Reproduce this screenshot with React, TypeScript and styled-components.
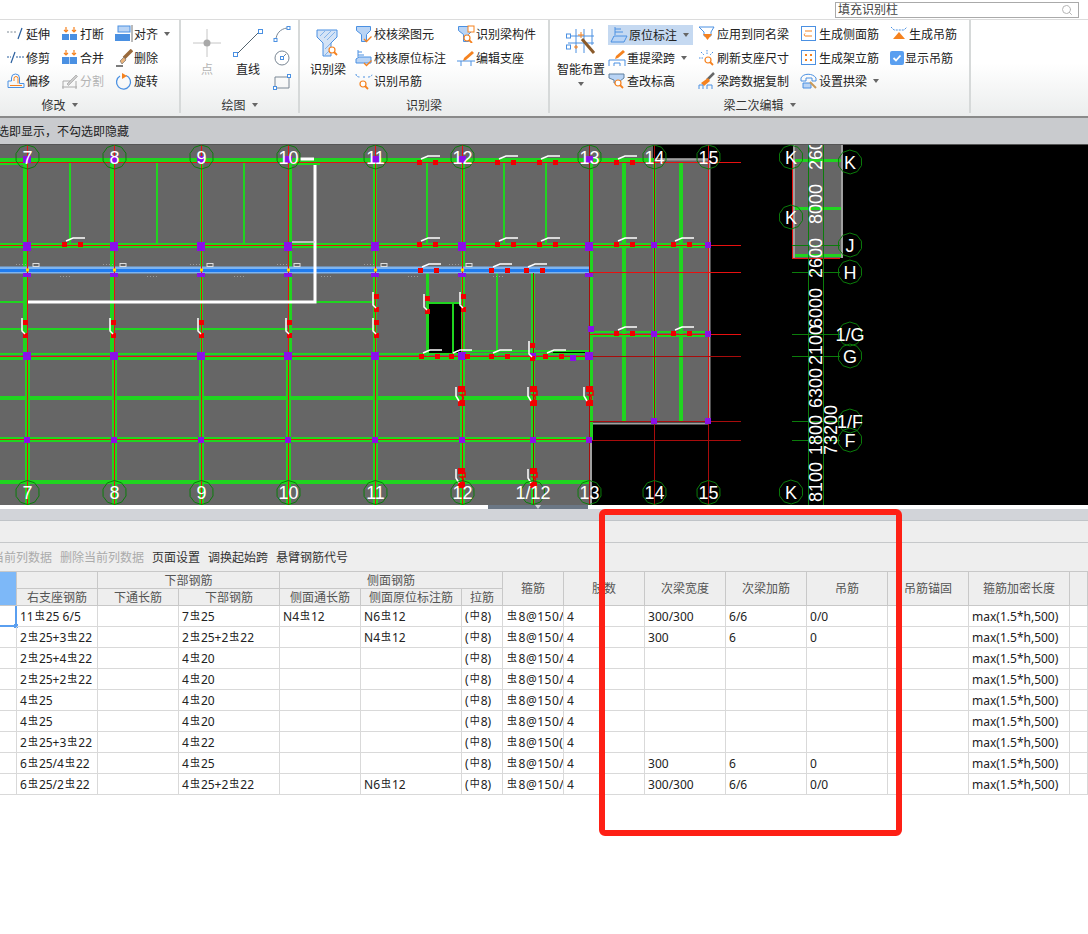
import React from 'react';
import styled, { createGlobalStyle } from 'styled-components';
import { Search } from 'lucide-react';

const BLUE = '#4a90e2';
const LIGHT = '#b9d4f5';
const ORANGE = '#f5821f';
const GREY = '#7f8a94';

const GlobalStyle = createGlobalStyle`
  html, body {
    margin: 0;
    background: #fff;
  }
  body {
    font-family: "Noto Sans", "Noto Sans CJK SC", sans-serif;
    font-size: 12px;
    color: #222;
  }
`;

const Page = styled.div`
  position: relative;
  width: 1088px;
  height: 934px;
  overflow: hidden;
  background: #fff;
`;

const TopBar = styled.div`
  display: flex;
  justify-content: flex-end;
  height: 19px;
  padding-right: 9px;
  border-bottom: 1px solid #dcdcdc;
`;

const SearchBox = styled.div`
  display: flex;
  align-items: center;
  justify-content: space-between;
  box-sizing: border-box;
  width: 244px;
  height: 16px;
  margin-top: 2px;
  padding: 0 5px 0 2px;
  border: 1px solid #aaa;
  color: #444;
  line-height: 14px;
  svg {
    color: #b5b5b5;
  }
`;

const Ribbon = styled.div`
  display: flex;
  height: 96px;
  border-bottom: 2px solid #8a8a8a;
  background: linear-gradient(#fff 0%, #fff 45%, #ebeded 100%);
`;

const Group = styled.div<{ $width: number; $shift?: number }>`
  display: flex;
  flex-direction: column;
  flex: none;
  box-sizing: border-box;
  width: ${({ $width }) => $width}px;
  margin-left: ${({ $shift }) => $shift || 0}px;
  border-right: 2px solid #d6d9d9;
  margin-bottom: 3px;
`;

const GroupBody = styled.div<{ $pad: number }>`
  display: flex;
  flex: none;
  height: 76px;
  padding-left: ${({ $pad }) => $pad}px;
`;

const GroupLabel = styled.div`
  display: flex;
  flex: none;
  align-items: center;
  justify-content: center;
  gap: 6px;
  height: 18px;
  color: #333;
`;

const Caret = styled.i<{ $gap?: number }>`
  display: inline-block;
  flex: none;
  width: 0;
  height: 0;
  margin-left: ${({ $gap }) => $gap || 0}px;
  border-left: 3.5px solid transparent;
  border-right: 3.5px solid transparent;
  border-top: 4px solid #666;
`;

const Column = styled.div<{ $width?: number; $left?: number }>`
  display: flex;
  flex-direction: column;
  flex: none;
  width: ${({ $width }) => ($width ? `${$width}px` : 'auto')};
  margin-left: ${({ $left }) => $left || 0}px;
  padding-top: 2.5px;
`;

const Item = styled.div<{ $active?: boolean; $off?: boolean }>`
  display: flex;
  align-items: center;
  gap: 1px;
  height: 23.5px;
  white-space: nowrap;
  color: ${({ $off }) => ($off ? '#b4b4b4' : '#222')};
  ${({ $active }) =>
    $active &&
    `
    box-sizing: border-box;
    width: 85px;
    height: 20px;
    margin: 2px 0 1.5px;
    padding-left: 2px;
    background: #c5d9f1;
  `}
`;

const Large = styled.div<{ $width: number; $left?: number; $off?: boolean }>`
  display: flex;
  flex-direction: column;
  align-items: center;
  flex: none;
  width: ${({ $width }) => $width}px;
  margin-left: ${({ $left }) => $left || 0}px;
  padding-top: 6px;
  color: ${({ $off }) => ($off ? '#b4b4b4' : '#222')};
`;

const LargeIcon = styled.div`
  display: flex;
  align-items: center;
  justify-content: center;
  height: 34px;
`;

const LargeText = styled.div`
  height: 22px;
  line-height: 20px;
  white-space: nowrap;
`;

const Hint = styled.div`
  height: 26px;
  border-bottom: 1px solid #555;
  background: #c9cbce;
  color: #222;
  line-height: 27px;
  white-space: nowrap;
  span {
    margin-left: -15px;
    display: inline-block;
  }
`;

const Canvas = styled.div`
  height: 360px;
  background: #000;
  svg {
    display: block;
  }
`;

const Splitter = styled.div`
  display: flex;
  height: 4px;
  padding-left: 488px;
  background: #fff;
`;

const SplitHandle = styled.div`
  display: flex;
  justify-content: center;
  align-items: center;
  width: 100px;
  background: #6b7785;
  i {
    border-top-color: #cfd3d8;
  }
`;

const Band = styled.div`
  height: 11px;
  border-bottom: 1px solid #c0c4c8;
  background: #d2d4d9;
`;

const EmptyPanel = styled.div`
  height: 21px;
  border-bottom: 1px solid #c6c8ca;
  background: #eee;
`;

const Toolbar = styled.div`
  display: flex;
  align-items: center;
  gap: 8px;
  height: 28px;
  margin-left: -32px;
  background: #eee;
  white-space: nowrap;
`;

const ToolText = styled.span<{ $off?: boolean }>`
  color: ${({ $off }) => ($off ? '#ababab' : '#333')};
`;

const Sheet = styled.table`
  width: 1088px;
  table-layout: fixed;
  border-collapse: separate;
  border-spacing: 0;
  border-top: 1px solid #c8c8c8;
`;

const Head = styled.th<{ $blue?: boolean }>`
  box-sizing: border-box;
  height: 17px;
  padding: 0;
  border-right: 1px solid #c8c8c8;
  border-bottom: 1px solid #c8c8c8;
  background: ${({ $blue }) => ($blue ? '#7db8f8' : '#eee')};
  color: #555;
  font-weight: 400;
  font-size: 12px;
  line-height: 15px;
  white-space: nowrap;
  overflow: hidden;
`;

const Cell = styled.td<{ $selected?: boolean }>`
  position: relative;
  box-sizing: border-box;
  height: 21px;
  padding: 0;
  border-right: 1px solid #d9d9d9;
  border-bottom: 1px solid #d9d9d9;
  overflow: hidden;
  ${({ $selected }) =>
    $selected &&
    `
    overflow: visible;
    border-right: 2px solid #5a9ff0;
    border-bottom: 2px solid #5a9ff0;
    &::after {
      content: '';
      position: absolute;
      right: -3px;
      bottom: -3px;
      width: 4px;
      height: 4px;
      background: #5a9ff0;
    }
  `}
`;

const CellText = styled.div<{ $wide?: boolean }>`
  height: 20px;
  padding-left: 3px;
  color: #222;
  font-size: 12px;
  line-height: 22px;
  letter-spacing: ${({ $wide }) => ($wide ? '0.5px' : '0')};
  white-space: nowrap;
  overflow: hidden;
`;

const SteelMark = styled.span`
  font-family: "Noto Sans CJK SC", sans-serif;
  font-size: 10px;
  line-height: 10px;
  margin: 0 1px;
  vertical-align: 2px;
`;

const Annotation = styled.div`
  position: absolute;
  left: 599px;
  top: 509px;
  box-sizing: border-box;
  width: 303px;
  height: 327px;
  border: 6px solid #fe2015;
  border-radius: 6px;
  pointer-events: none;
`;

const Ic = ({ w = 18, h = 18, children }: { w?: number; h?: number; children: React.ReactNode }) => (
  <svg width={w} height={h} viewBox={`0 0 ${w} ${h}`} fill="none" style={{ flex: 'none' }}>
    {children}
  </svg>
);

const Lens = ({ x, y }: { x: number; y: number }) => (
  <g stroke={ORANGE} strokeWidth="1.2">
    <circle cx={x} cy={y} r="3" fill="#fff" />
    <path d={`M${x + 2} ${y + 2}l3 3`} strokeWidth="1.8" />
  </g>
);

const Tick = ({ x, y }: { x: number; y: number }) => (
  <path d={`M${x} ${y}l2.5 2.5 5-5`} stroke={ORANGE} strokeWidth="1.3" />
);

const Funnel = () => (
  <path d="M1.5 1.5h14v4l-4 4v7h-5v-7l-5-4z" fill={LIGHT} stroke={BLUE} />
);

const icons: Record<string, React.ReactNode> = {
  extend: (
    <Ic>
      <path d="M0 7h10" stroke={GREY} strokeDasharray="2 1.5" />
      <path d="M11 14l4-11" stroke="#2a5f9e" strokeWidth="1.2" />
    </Ic>
  ),
  breakUp: (
    <Ic>
      <path d="M5 2v5M3 5l2 2 2-2M13 2v5M11 5l2 2 2-2" stroke={ORANGE} strokeWidth="1.2" />
      <rect x="1" y="9" width="7" height="6" fill={BLUE} />
      <rect x="9" y="9" width="7" height="6" fill={BLUE} />
    </Ic>
  ),
  align: (
    <Ic>
      <rect x="3" y="1" width="12" height="6" fill={LIGHT} stroke={BLUE} />
      <rect x="0" y="9" width="15" height="7" fill={BLUE} />
      <path d="M17 0v17" stroke="#777" />
    </Ic>
  ),
  trim: (
    <Ic>
      <path d="M0 8h4M9 8h8" stroke="#2a5f9e" strokeDasharray="2 1" />
      <path d="M4 14L8 3" stroke="#2a5f9e" strokeWidth="1.2" />
    </Ic>
  ),
  merge: (
    <Ic>
      <path d="M5 1v5M3 4l2 2 2-2M13 1v5M11 4l2 2 2-2" stroke={ORANGE} strokeWidth="1.2" />
      <rect x="1" y="8" width="15" height="7" fill={BLUE} />
      <path d="M8.5 8v7" stroke={LIGHT} />
    </Ic>
  ),
  brush: (
    <Ic>
      <path d="M17 1L9 9" stroke="#9a6a3c" strokeWidth="3.5" />
      <path d="M9 8l-4 4 2 3 4-4z" fill="#e8b27a" stroke="#666" strokeWidth=".6" />
      <path d="M1 17h7" stroke="#222" strokeWidth="1.2" />
    </Ic>
  ),
  offset: (
    <Ic>
      <path d="M1 15.5h16v-4h-4.500V6a4 4 0 00-8 0v3H1z" stroke={BLUE} />
      <path d="M3 13.500h12M7 9V6.500a2 2 0 014 0v5" stroke={ORANGE} />
    </Ic>
  ),
  divide: (
    <Ic>
      <path d="M1 15h15M2 9v8M15 9v8M2 9h7" stroke="#aaa" />
      <path d="M6 12l9-9 1.500 1.500-9 9z" fill="#ccc" stroke="#999" strokeWidth=".6" />
    </Ic>
  ),
  rotate: (
    <Ic>
      <path d="M11 3.500a7 7 0 11-6 .5" stroke={BLUE} strokeWidth="1.3" />
      <path d="M7 1l5 3-5 3z" fill={ORANGE} />
    </Ic>
  ),
  point: (
    <Ic w={30} h={30}>
      <path d="M15 1v28M1 15h28" stroke="#c6c6c6" />
      <circle cx="15" cy="15" r="3.500" fill="#a8a8a8" />
    </Ic>
  ),
  line: (
    <Ic w={30} h={30}>
      <path d="M3 27L27 3" stroke="#55646f" />
      <rect x="0.500" y="24.500" width="4" height="4" fill="#fff" stroke={BLUE} />
      <rect x="25.500" y="1.500" width="4" height="4" fill="#fff" stroke={BLUE} />
    </Ic>
  ),
  arc: (
    <Ic>
      <path d="M3 15C3 9 7 4 14 3" stroke="#7a8794" />
      <rect x="1" y="13.500" width="3" height="3" fill="#fff" stroke={BLUE} />
      <rect x="14" y="1.500" width="3" height="3" fill="#fff" stroke={BLUE} />
    </Ic>
  ),
  circle: (
    <Ic>
      <circle cx="9" cy="9" r="7" stroke="#7a8794" />
      <path d="M9 9l4-4" stroke="#7a8794" />
      <rect x="7.500" y="7.500" width="3" height="3" fill="#fff" stroke={BLUE} />
    </Ic>
  ),
  rect: (
    <Ic>
      <path d="M2 5h14v11H2z" stroke="#7a8794" />
      <rect x="14.500" y="2.500" width="3" height="3" fill="#fff" stroke={BLUE} />
      <rect x="0.500" y="14.500" width="3" height="3" fill="#fff" stroke={BLUE} />
    </Ic>
  ),
  funnelLarge: (
    <Ic w={24} h={28}>
      <path d="M1 1h20v7l-6 6v13H7V14L1 8z" fill="#d4e3f6" stroke={BLUE} />
      <path d="M4 7l5-5M8 9l7-7M11 11l8-8M9 20l6-6M9 26l6-6" stroke={BLUE} strokeWidth=".6" />
      <Lens x={16} y={21} />
    </Ic>
  ),
  checkBeam: (
    <Ic>
      <Funnel />
      <Tick x={9} y={14} />
    </Ic>
  ),
  checkMark: (
    <Ic>
      <path d="M3 1v7M3 3h4M3 6h6" stroke={BLUE} />
      <path d="M1 10l3-2h12v6H1z" fill={LIGHT} stroke={BLUE} />
      <Tick x={9} y={14} />
    </Ic>
  ),
  findHanger: (
    <Ic>
      <path d="M1 2c0 3 3 3 4 3M8 5h2M13 5c1 0 4 0 4-3" stroke={BLUE} strokeDasharray="2 1" />
      <Lens x={8} y={12} />
    </Ic>
  ),
  beamPart: (
    <Ic>
      <Funnel />
      <rect x="11" y="1" width="6" height="6" fill="#fff" stroke={ORANGE} />
      <Lens x={10} y={13} />
    </Ic>
  ),
  editSupport: (
    <Ic>
      <path d="M15 2l2 2-8 7-3 1 1-3z" fill={ORANGE} />
      <path d="M0 12h18M4 12v5M14 12v5" stroke={BLUE} />
    </Ic>
  ),
  smartGrid: (
    <Ic w={30} h={32}>
      <path d="M2 9h26M2 16h26M10 2v24M18 2v24M26 2v16" stroke={BLUE} strokeWidth="1" />
      <rect x="0.500" y="7" width="4" height="4" fill="#fff" stroke={BLUE} />
      <rect x="0.500" y="18" width="4" height="4" fill="#fff" stroke={BLUE} />
      <path d="M16 12l12 14" stroke="#8a5a2a" strokeWidth="3" />
      <path d="M12 8h6M15 5v6M8 20h4M10 18v4" stroke={ORANGE} />
    </Ic>
  ),
  markHere: (
    <Ic>
      <path d="M5 1v8M5 3h6M5 6h8" stroke={BLUE} />
      <path d="M1 16l3-6h13l-3 6z" fill={LIGHT} stroke={BLUE} />
    </Ic>
  ),
  respan: (
    <Ic>
      <path d="M15 1l2 2-7 6-3 1 1-3z" fill={ORANGE} />
      <path d="M1 17v-6h16v6M6 17v-3h6v3" stroke={BLUE} />
    </Ic>
  ),
  level: (
    <Ic>
      <path d="M1 2h15v4l-4 3v2H6V8L1 6z" fill={LIGHT} stroke="#5f7f9f" />
      <Lens x={10} y={11} />
    </Ic>
  ),
  sameName: (
    <Ic>
      <path d="M1 2h15l-3 5v4H6V7z" stroke={BLUE} />
      <path d="M5 9h9l-4.500 6z" fill={ORANGE} />
    </Ic>
  ),
  refresh: (
    <Ic>
      <path d="M9 1v4M1 9h4M3 3l3 3M15 3l-3 3" stroke={BLUE} strokeDasharray="1.500 1" />
      <Lens x={10} y={11} />
    </Ic>
  ),
  copySpan: (
    <Ic>
      <path d="M16 1l-7 7" stroke="#666" strokeWidth="2.500" />
      <path d="M10 6L3 11l3 3 6-5z" fill={ORANGE} />
      <path d="M1 17v-4h4v4M9 17v-4h5v4" stroke={BLUE} />
    </Ic>
  ),
  sideBar: (
    <Ic>
      <rect x="1.500" y="1.500" width="14" height="14" stroke={BLUE} />
      <path d="M5 6h7M5 8.500c-1 1-1 2 0 2.500h7" stroke={ORANGE} />
    </Ic>
  ),
  frameBar: (
    <Ic>
      <rect x="1.500" y="1.500" width="14" height="14" stroke={BLUE} />
      <path d="M5 5h2v2H5zM10 5h2v2h-2zM5 10h2v2H5zM10 10h2v2h-2z" fill={ORANGE} />
    </Ic>
  ),
  arch: (
    <Ic>
      <path d="M1 6c2-5 12-5 15 0v3h-4V6H6v3H1z" stroke={BLUE} />
      <path d="M3 11h8v5H3z" fill={LIGHT} stroke={BLUE} />
      <path d="M10 10l6 6" stroke="#c89a5a" strokeWidth="2" />
    </Ic>
  ),
  hanger: (
    <Ic>
      <path d="M1 2l3 3h10l3-3" stroke={BLUE} strokeDasharray="2 1" />
      <path d="M9 7l6 7H3z" fill={ORANGE} />
    </Ic>
  ),
  checked: (
    <Ic w={14} h={16}>
      <rect y="1" width="14" height="14" rx="2" fill="#5a9ff0" />
      <path d="M3.500 8l2.500 2.500 4.500-5" stroke="#fff" strokeWidth="1.800" />
    </Ic>
  ),
};

interface Tool {
  icon: string;
  label?: string;
  caret?: boolean;
  off?: boolean;
  active?: boolean;
}

function ToolColumn({ tools, width, left }: { tools: Tool[]; width?: number; left?: number }) {
  return (
    <Column $width={width} $left={left}>
      {tools.map(({ icon, label, caret, off, active }) => (
        <Item key={icon} $off={off} $active={active}>
          {icons[icon]}
          {label}
          {caret && <Caret $gap={5} />}
        </Item>
      ))}
    </Column>
  );
}

function Tools() {
  return (
    <Ribbon>
      <Group $width={241} $shift={-60}>
        <GroupBody $pad={67}>
          <ToolColumn
            width={54}
            tools={[
              { icon: 'extend', label: '延伸' },
              { icon: 'trim', label: '修剪' },
              { icon: 'offset', label: '偏移' },
            ]}
          />
          <ToolColumn
            width={54}
            tools={[
              { icon: 'breakUp', label: '打断' },
              { icon: 'merge', label: '合并' },
              { icon: 'divide', label: '分割', off: true },
            ]}
          />
          <ToolColumn
            tools={[
              { icon: 'align', label: '对齐', caret: true },
              { icon: 'brush', label: '删除' },
              { icon: 'rotate', label: '旋转' },
            ]}
          />
        </GroupBody>
        <GroupLabel>
          修改
          <Caret />
        </GroupLabel>
      </Group>

      <Group $width={119}>
        <GroupBody $pad={11}>
          <Large $width={30} $off>
            <LargeIcon>{icons.point}</LargeIcon>
            <LargeText>点</LargeText>
          </Large>
          <Large $width={30} $left={11}>
            <LargeIcon>{icons.line}</LargeIcon>
            <LargeText>直线</LargeText>
          </Large>
          <ToolColumn
            left={10}
            tools={[{ icon: 'arc' }, { icon: 'circle' }, { icon: 'rect' }]}
          />
        </GroupBody>
        <GroupLabel>
          绘图
          <Caret />
        </GroupLabel>
      </Group>

      <Group $width={250}>
        <GroupBody $pad={10}>
          <Large $width={36}>
            <LargeIcon>{icons.funnelLarge}</LargeIcon>
            <LargeText>识别梁</LargeText>
          </Large>
          <ToolColumn
            left={9}
            width={102}
            tools={[
              { icon: 'checkBeam', label: '校核梁图元' },
              { icon: 'checkMark', label: '校核原位标注' },
              { icon: 'findHanger', label: '识别吊筋' },
            ]}
          />
          <ToolColumn
            tools={[
              { icon: 'beamPart', label: '识别梁构件' },
              { icon: 'editSupport', label: '编辑支座' },
            ]}
          />
        </GroupBody>
        <GroupLabel>识别梁</GroupLabel>
      </Group>

      <Group $width={421}>
        <GroupBody $pad={7}>
          <Large $width={48}>
            <LargeIcon>{icons.smartGrid}</LargeIcon>
            <LargeText>智能布置</LargeText>
            <Caret />
          </Large>
          <ToolColumn
            left={3}
            width={90}
            tools={[
              { icon: 'markHere', label: '原位标注', caret: true, active: true },
              { icon: 'respan', label: '重提梁跨', caret: true },
              { icon: 'level', label: '查改标高' },
            ]}
          />
          <ToolColumn
            width={102}
            tools={[
              { icon: 'sameName', label: '应用到同名梁' },
              { icon: 'refresh', label: '刷新支座尺寸' },
              { icon: 'copySpan', label: '梁跨数据复制' },
            ]}
          />
          <ToolColumn
            width={90}
            tools={[
              { icon: 'sideBar', label: '生成侧面筋' },
              { icon: 'frameBar', label: '生成架立筋' },
              { icon: 'arch', label: '设置拱梁', caret: true },
            ]}
          />
          <ToolColumn
            tools={[
              { icon: 'hanger', label: '生成吊筋' },
              { icon: 'checked', label: '显示吊筋' },
            ]}
          />
        </GroupBody>
        <GroupLabel>
          梁二次编辑
          <Caret />
        </GroupLabel>
      </Group>
    </Ribbon>
  );
}

const GREEN = '#20d420';
const DARK_GREEN = '#0b7d0b';
const RED = '#e81010';
const DARK_RED = '#a80c0c';
const PURPLE = '#8a10e8';

const axisX = [27, 114, 201, 288, 375, 462, 589, 654, 708];
const axisNames = ['7', '8', '9', '10', '11', '12', '13', '14', '15'];
const mainAxes = [27, 114, 201, 288, 375, 462, 589];

type Seg = [number, number, number, number, number?];

const greenLines: Seg[] = [
  [0, 160, 654, 160, 4],
  [0, 164, 24, 164, 1.5],
  [290, 164, 320, 164, 1.5],
  [0, 244, 708, 244, 3],
  [0, 247, 708, 247, 1.5],
  [0, 302, 24, 302, 2],
  [316, 302, 372, 302, 2],
  [0, 329, 375, 329, 2],
  [0, 354, 590, 354, 1.5],
  [0, 358, 590, 358, 3],
  [0, 398, 590, 398, 4],
  [0, 438, 590, 438, 1.5],
  [0, 441, 590, 441, 1.5],
  [0, 482, 590, 482, 4],
  [590, 332, 708, 332, 1.5],
  [590, 336, 708, 336, 2],
  [70, 162, 70, 243, 2],
  [157, 162, 157, 243, 2],
  [244, 162, 244, 243, 2],
  [427, 162, 427, 243, 2],
  [504, 162, 504, 243, 2],
  [546, 162, 546, 243, 2],
  [427, 273, 427, 356, 3],
  [497, 273, 497, 356, 2],
  [533, 273, 533, 505, 4],
  [624, 162, 624, 421, 4],
  [681, 162, 681, 421, 4],
  [25, 160, 25, 356, 4],
  [112.5, 160, 112.5, 356, 5],
  [201.5, 160, 201.5, 356, 3],
  [290, 160, 290, 356, 4],
  [374.5, 160, 374.5, 356, 4],
  [463, 160, 463, 356, 4],
  [591, 160, 591, 441, 3],
  [654.5, 160, 654.5, 422, 3],
  [27.5, 356, 27.5, 505, 5],
  [114.5, 356, 114.5, 505, 5],
  [201.5, 356, 201.5, 505, 5],
  [288.5, 356, 288.5, 505, 5],
  [375.5, 356, 375.5, 505, 5],
  [462.5, 356, 462.5, 505, 5],
  [462, 351, 590, 351, 2],
];

const redLines: Seg[] = [
  [0, 162, 741, 162],
  [0, 245.500, 741, 245.500],
  [589, 272, 741, 272],
  [589, 334, 741, 334],
  [0, 356, 590, 356],
  [0, 439.500, 590, 439.500],
  [27, 145, 27, 505],
  [114, 145, 114, 505],
  [201, 145, 201, 505],
  [288, 145, 288, 505],
  [375, 145, 375, 505],
  [462, 145, 462, 505],
  [708.500, 145, 708.500, 422],
  [792, 160, 792, 258],
  [792, 258, 840, 258],
];

const darkRedLines: Seg[] = [
  [590, 356, 741, 356],
  [589, 421, 741, 421],
  [590, 440, 741, 440],
  [589, 145, 589, 505],
  [654, 145, 654, 505],
  [708.500, 422, 708.500, 505],
  [533, 273, 533, 505],
];

const darkGreenLines: Seg[] = [
  [808, 145, 808, 505],
  [823, 145, 823, 505],
  [792, 245, 840, 245],
  [792, 272, 840, 272],
  [792, 334, 840, 334],
  [792, 356, 840, 356],
  [792, 421, 840, 421],
  [792, 440, 840, 440],
];

const hMarks: [number, number][] = [
  [64, 244], [419, 162], [497, 162], [539, 162], [616, 162],
  [419, 244], [497, 244], [539, 244], [616, 244], [673, 244],
  [420, 270], [491, 270], [526, 270],
  [616, 333], [673, 333],
  [421, 356], [451, 356], [491, 356], [545, 356],
];

const vMarks: [number, number][] = [
  [25, 322], [113, 322], [201, 322], [289, 322], [376, 322], [376, 296],
  [427, 298], [463, 296], [532, 345],
];

// the heavier rebar marks on the lower beam rows
const heavyMarks: [number, number][] = [
  [461, 388], [533, 388], [589, 388], [461, 470], [533, 470],
];

const smallSquares: [number, number][] = [
  [654, 245], [708, 245], [654, 334], [708, 334], [654, 421], [708, 421],
  [533, 356], [533, 440], [591, 329], [573, 358],
];

function bubblePoints(cx: number, cy: number) {
  const pts: string[] = [];
  for (let i = 0; i < 10; i++) {
    const a = (Math.PI * 2 * i) / 10 + 0.3;
    pts.push(`${(cx + 12 * Math.cos(a)).toFixed(1)},${(cy + 12 * Math.sin(a)).toFixed(1)}`);
  }
  return pts.join(' ');
}

function Segs({ list, color, width = 1 }: { list: Seg[]; color: string; width?: number }) {
  return (
    <g stroke={color} shapeRendering="crispEdges">
      {list.map(([x1, y1, x2, y2, w], i) => (
        <line key={i} x1={x1} y1={y1} x2={x2} y2={y2} strokeWidth={w || width} />
      ))}
    </g>
  );
}

const AxisText = styled.text`
  fill: #fff;
  font-family: "Liberation Sans", Arial, sans-serif;
  font-size: 18px;
`;

function Bubble({ x, y, name }: { x: number; y: number; name: string }) {
  return (
    <g>
      <polygon points={bubblePoints(x, y)} fill="none" stroke={DARK_GREEN} />
      <AxisText x={x} y={y + 6.5} textAnchor="middle">
        {name}
      </AxisText>
    </g>
  );
}

function Dim({ x, y, text }: { x: number; y: number; text: string }) {
  return (
    <AxisText x={x} y={y} textAnchor="middle" transform={`rotate(-90 ${x} ${y})`}>
      {text}
    </AxisText>
  );
}

function Drawing() {
  return (
    <svg width="1088" height="360" viewBox="0 145 1088 360">
      <path d="M0 145H653V158H709V422H592V505H0z" fill="#666" />
      <path d="M660 159.500H708M709.500 160V423M592 423.500H709M591 423V505" stroke="#a0a0a0" strokeWidth="2" />
      <rect x="793" y="145" width="50" height="113" fill="#666" />
      <path d="M842 145V258M794 145V258" stroke="#a0a0a0" strokeWidth="2" />
      <rect x="429" y="304" width="32" height="51" fill="#000" />
      <rect x="553" y="351" width="34" height="4" fill="#000" />
      <Segs list={greenLines} color={GREEN} />
      <Segs
        list={[
          [795, 160, 841, 160],
          [795, 208, 841, 208],
          [795, 255, 841, 255],
        ]}
        color={GREEN}
        width={3}
      />
      <path d="M428 303H460M453 304V355" stroke={GREEN} strokeWidth="2" />
      <rect x="0" y="266.500" width="590" height="7" fill="#7eb4f0" />
      <rect x="0" y="269" width="590" height="3" fill="#1f7cf0" />
      <Segs list={redLines} color={RED} />
      <Segs list={darkRedLines} color={DARK_RED} />
      <Segs list={darkGreenLines} color={DARK_GREEN} />
      <path d="M28 302H315V165M300 159H314" stroke="#fff" strokeWidth="3" fill="none" />
      <path d="M292 242H315" stroke="#ddd" strokeWidth="1.500" />
      {mainAxes.map((x) => (
        <g key={x} fill={PURPLE}>
          <rect x={x - 4} y={242} width={8} height={9} />
          <rect x={x - 4} y={273} width={8} height={4} />
          <rect x={x - 4} y={352} width={8} height={8} />
          <rect x={x - 3} y={437} width={6} height={6} />
          <rect x={x - 4} y={156} width={8} height={7} />
        </g>
      ))}
      {smallSquares.map(([x, y]) => (
        <rect key={`${x}-${y}`} x={x - 3} y={y - 3} width="6" height="6" fill={PURPLE} />
      ))}
      {[27, 114, 201, 288, 375, 462].map((x) => (
        <rect key={x} x={x - 1} y={268.500} width="3" height="3" fill="#ffe000" />
      ))}
      {[36, 123, 210, 297, 384, 469].map((x) => (
        <g key={x}>
          <rect x={x - 3} y={263.500} width="6" height="3" fill="none" stroke="#ddd" />
          <path d={`M${x - 20} 264.500h12M${x + 24} 276.500h12`} stroke="#999" strokeDasharray="1 2" />
        </g>
      ))}
      {hMarks.map(([x, y]) => (
        <g key={`${x}-${y}`}>
          <rect x={x - 2} y={y - 2} width="5" height="5" fill="#f00000" />
          <rect x={x + 14} y={y - 2} width="5" height="5" fill="#f00000" />
          <path d={`M${x + 2} ${y - 3}l7-3h12`} stroke="#fff" strokeWidth="1.500" fill="none" />
        </g>
      ))}
      {vMarks.map(([x, y]) => (
        <g key={`${x}-${y}`}>
          <rect x={x - 2} y={y - 2} width="5" height="5" fill="#f00000" />
          <rect x={x - 2} y={y + 11} width="5" height="5" fill="#f00000" />
          <path d={`M${x} ${y + 12}l-3-3v-13`} stroke="#fff" strokeWidth="1.500" fill="none" />
        </g>
      ))}
      {heavyMarks.map(([x, y]) => (
        <g key={`${x}-${y}`}>
          <rect x={x - 3} y={y - 2} width="7" height="6" fill="#f00000" />
          <rect x={x - 3} y={y + 12} width="7" height="6" fill="#f00000" />
          <path d={`M${x + 1} ${y + 3}h3v4h-4q5 3 0 6`} stroke="#f00000" strokeWidth="1.500" fill="none" />
          <path d={`M${x - 2} ${y + 13}l-3-5v-9`} stroke="#fff" strokeWidth="1.500" fill="none" />
        </g>
      ))}
      {axisX.map((x, i) => (
        <React.Fragment key={x}>
          <Bubble x={x + 0.5} y={157} name={axisNames[i]} />
          <Bubble x={x + 0.5} y={492.500} name={axisNames[i]} />
        </React.Fragment>
      ))}
      <Bubble x={533} y={492.500} name="1/12" />
      <Bubble x={791} y={157} name="K" />
      <Bubble x={791} y={217} name="K" />
      <Bubble x={791} y={492} name="K" />
      <Bubble x={850} y={162} name="K" />
      <Bubble x={850} y={245} name="J" />
      <Bubble x={850} y={272} name="H" />
      <Bubble x={850} y={334} name="1/G" />
      <Bubble x={850} y={356} name="G" />
      <Bubble x={850} y={421} name="1/F" />
      <Bubble x={850} y={440} name="F" />
      <Dim x={822} y={150} text="2600" />
      <Dim x={822} y={204} text="8000" />
      <Dim x={822} y={258} text="2600" />
      <Dim x={822} y={308} text="6000" />
      <Dim x={822} y={345} text="2100" />
      <Dim x={822} y={388} text="6300" />
      <Dim x={822} y={435} text="1800" />
      <Dim x={822} y={482} text="8100" />
      <Dim x={837} y={430} text="73200" />
    </svg>
  );
}

const colWidths = [17, 81, 81, 101, 81, 101, 41, 61, 81, 81, 81, 81, 81, 101, 18];

const STIRRUP = '虫8@150/200(4)';
const TIE = '(中8)';
const DENSE = 'max(1.5*h,500)';
const STIRRUP_COLUMN = 6;

const rows: string[][] = [
  ['11虫25 6/5', '', '7虫25', 'N4虫12', 'N6虫12', TIE, STIRRUP, '4', '300/300', '6/6', '0/0', '', DENSE, ''],
  ['2虫25+3虫22', '', '2虫25+2虫22', '', 'N4虫12', TIE, STIRRUP, '4', '300', '6', '0', '', DENSE, ''],
  ['2虫25+4虫22', '', '4虫20', '', '', TIE, STIRRUP, '4', '', '', '', '', DENSE, ''],
  ['2虫25+2虫22', '', '4虫20', '', '', TIE, STIRRUP, '4', '', '', '', '', DENSE, ''],
  ['4虫25', '', '4虫20', '', '', TIE, STIRRUP, '4', '', '', '', '', DENSE, ''],
  ['4虫25', '', '4虫20', '', '', TIE, STIRRUP, '4', '', '', '', '', DENSE, ''],
  ['2虫25+3虫22', '', '4虫22', '', '', TIE, '虫8@150(4)', '4', '', '', '', '', DENSE, ''],
  ['6虫25/4虫22', '', '4虫25', '', '', TIE, STIRRUP, '4', '300', '6', '0', '', DENSE, ''],
  ['6虫25/2虫22', '', '4虫25+2虫22', '', 'N6虫12', TIE, STIRRUP, '4', '300/300', '6/6', '0/0', '', DENSE, ''],
];

function Rebar({ text }: { text: string }) {
  return (
    <>
      {text.split(/([虫中])/).map((part, i) =>
        part === '虫' || part === '中' ? <SteelMark key={i}>{part}</SteelMark> : part,
      )}
    </>
  );
}

function SteelTable() {
  return (
    <Sheet>
      <colgroup>
        {colWidths.map((w, i) => (
          <col key={i} width={w} />
        ))}
      </colgroup>
      <thead>
        <tr>
          <Head rowSpan={2} $blue />
          <Head />
          <Head colSpan={2}>下部钢筋</Head>
          <Head colSpan={3}>侧面钢筋</Head>
          <Head rowSpan={2}>箍筋</Head>
          <Head rowSpan={2}>肢数</Head>
          <Head rowSpan={2}>次梁宽度</Head>
          <Head rowSpan={2}>次梁加筋</Head>
          <Head rowSpan={2}>吊筋</Head>
          <Head rowSpan={2}>吊筋锚固</Head>
          <Head rowSpan={2}>箍筋加密长度</Head>
          <Head rowSpan={2} />
        </tr>
        <tr>
          <Head>右支座钢筋</Head>
          <Head>下通长筋</Head>
          <Head>下部钢筋</Head>
          <Head>侧面通长筋</Head>
          <Head>侧面原位标注筋</Head>
          <Head>拉筋</Head>
        </tr>
      </thead>
      <tbody>
        {rows.map((row, r) => (
          <tr key={r}>
            <Cell $selected={r === 0} />
            {row.map((text, c) => (
              <Cell key={c}>
                <CellText $wide={c === STIRRUP_COLUMN}>
                  <Rebar text={text} />
                </CellText>
              </Cell>
            ))}
          </tr>
        ))}
      </tbody>
    </Sheet>
  );
}

function App() {
  return (
    <Page>
      <GlobalStyle />
      <TopBar>
        <SearchBox>
          填充识别柱
          <Search size={12} />
        </SearchBox>
      </TopBar>
      <Tools />
      <Hint>
        <span>勾选即显示，不勾选即隐藏</span>
      </Hint>
      <Canvas>
        <Drawing />
      </Canvas>
      <Splitter>
        <SplitHandle>
          <Caret />
        </SplitHandle>
      </Splitter>
      <Band />
      <EmptyPanel />
      <Toolbar>
        <ToolText $off>插入当前列数据</ToolText>
        <ToolText $off>删除当前列数据</ToolText>
        <ToolText>页面设置</ToolText>
        <ToolText>调换起始跨</ToolText>
        <ToolText>悬臂钢筋代号</ToolText>
      </Toolbar>
      <SteelTable />
      <Annotation />
    </Page>
  );
}

export default App;
